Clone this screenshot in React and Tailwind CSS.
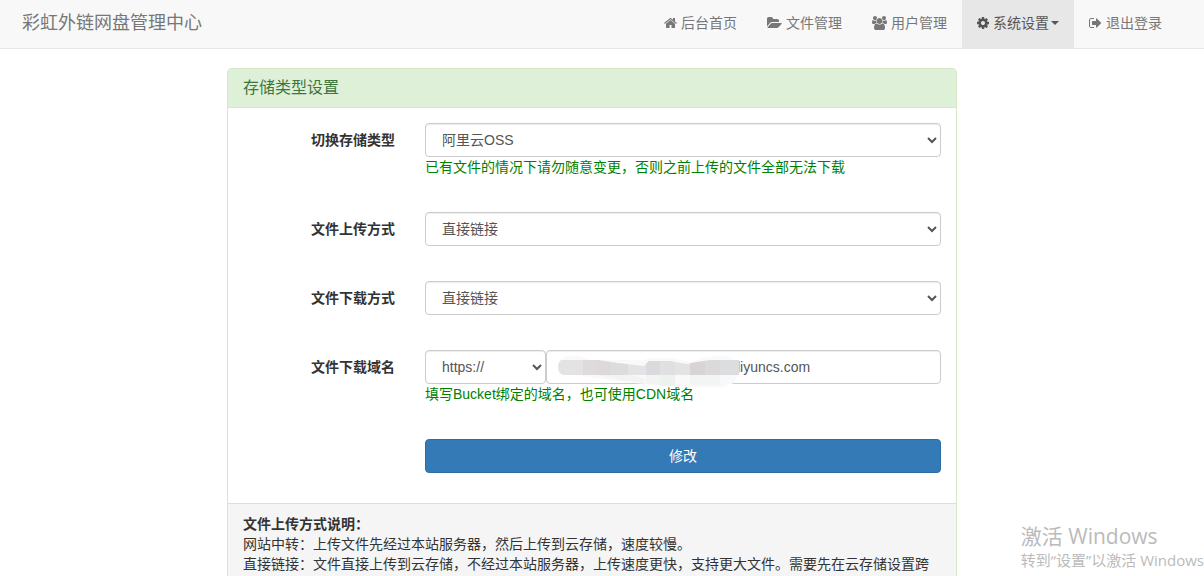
import { useState } from "react";

const HomeIcon = () => (
  <svg viewBox="0 0 1664 1792" className="h-3.5 w-[13px] fill-current" aria-hidden="true">
    <path d="M1408 992v480q0 26-19 45t-45 19h-384v-384h-256v384h-384q-26 0-45-19t-19-45v-480q0-1 .5-3t.5-3l575-474 575 474q1 2 1 6zm223-69l-62 74q-8 9-21 11h-3q-13 0-21-7l-692-577-692 577q-12 8-24 7-13-2-21-11l-62-74q-8-10-7-23.5t11-21.5l719-599q32-26 76-26t76 26l244 204v-195q0-14 9-23t23-9h192q14 0 23 9t9 23v408l219 182q10 8 11 21.5t-7 23.5z" />
  </svg>
);

const FolderIcon = () => (
  <svg viewBox="-64 0 1920 1792" className="h-3.5 w-[15px] fill-current" aria-hidden="true">
    <path d="M1815 952q0 31-31 66l-336 396q-43 51-120.5 86.5t-143.5 35.5h-1088q-34 0-60.5-13t-26.5-43q0-31 31-66l336-396q43-51 120.5-86.5t143.5-35.5h1088q34 0 60.5 13t26.5 43zm-343-344v160h-832q-94 0-197 47.5t-164 119.5l-337 396-5 6q0-4-.5-12.5t-.5-12.5v-960q0-92 66-158t158-66h320q92 0 158 66t66 158v32h544q92 0 158 66t66 158z" />
  </svg>
);

const UsersIcon = () => (
  <svg viewBox="0 0 1920 1792" className="h-3.5 w-[15px] fill-current" aria-hidden="true">
    <path d="M593 896q-162 5-265 128h-134q-82 0-138-40.5t-56-118.5q0-353 124-353 6 0 43.5 21t97.5 42.5 119 21.5q67 0 133-23-5 37-5 66 0 139 81 256zm1071 637q0 120-73 189.5t-194 69.5h-874q-121 0-194-69.5t-73-189.5q0-53 3.5-103.5t14-109 26.5-108.5 43-97.5 62-81 85.5-53.5 111.5-20q10 0 43 21.5t73 48 107 48 135 21.5 135-21.5 107-48 73-48 43-21.5q61 0 111.5 20t85.5 53.5 62 81 43 97.5 26.5 108.5 14 109 3.5 103.5zm-1024-1277q0 106-75 181t-181 75-181-75-75-181 75-181 181-75 181 75 75 181zm704 384q0 159-112.5 271.5t-271.5 112.5-271.5-112.5-112.5-271.5 112.5-271.5 271.5-112.5 271.5 112.5 112.5 271.5zm576 225q0 78-56 118.5t-138 40.5h-134q-103-123-265-128 81-117 81-256 0-29-5-66 66 23 133 23 59 0 119-21.5t97.5-42.5 43.5-21q124 0 124 353zm-128-609q0 106-75 181t-181 75-181-75-75-181 75-181 181-75 181 75 75 181z" />
  </svg>
);

const CogIcon = () => (
  <svg viewBox="0 0 1536 1792" className="h-3.5 w-3 fill-current" aria-hidden="true">
    <path d="M1024 896q0-106-75-181t-181-75-181 75-75 181 75 181 181 75 181-75 75-181zm512-109v222q0 12-8 23t-20 13l-185 28q-19 54-39 91 35 50 107 138 10 12 10 25t-9 23q-27 37-99 108t-94 71q-12 0-26-9l-138-108q-44 23-91 38-16 136-29 186-7 28-36 28h-222q-14 0-24.5-8.5t-11.5-21.5l-28-184q-49-16-90-37l-141 107q-10 9-25 9-14 0-25-11-126-114-165-168-7-10-7-23 0-12 8-23 15-21 51-66.5t54-70.5q-27-50-41-99l-183-27q-13-2-21-12.5t-8-23.5v-222q0-12 8-23t19-13l186-28q14-46 39-92-40-57-107-138-10-12-10-24 0-10 9-23 26-36 98.5-107.5t94.5-71.5q13 0 26 10l138 107q44-23 91-38 16-136 29-186 7-28 36-28h222q14 0 24.5 8.5t11.5 21.5l28 184q49 16 90 37l142-107q9-9 24-9 13 0 25 10 129 119 165 170 7 8 7 22 0 12-8 23-15 21-51 66.5t-54 70.5q26 50 41 98l183 28q13 2 21 12.5t8 23.5z" />
  </svg>
);

const SignOutIcon = () => (
  <svg viewBox="0 0 1664 1792" className="h-3.5 w-[13px] fill-current" aria-hidden="true">
    <path d="M640 1440q0 4 1 20t.5 26.5-3 23.5-10 19.5-20.5 6.5h-320q-119 0-203.5-84.5t-84.5-203.5v-704q0-119 84.5-203.5t203.5-84.5h320q13 0 22.5 9.5t9.5 22.5q0 4 1 20t.5 26.5-3 23.5-10 19.5-20.5 6.5h-320q-66 0-113 47t-47 113v704q0 66 47 113t113 47h312l11.5 1 11.5 3 8 5.5 7 9 2 13.5zm928-544q0 26-19 45l-544 544q-19 19-45 19t-45-19-19-45v-288h-448q-26 0-45-19t-19-45v-384q0-26 19-45t45-19h448v-288q0-26 19-45t45-19 45 19l544 544q19 19 19 45z" />
  </svg>
);

const navItems = [
  { label: "后台首页", icon: HomeIcon },
  { label: "文件管理", icon: FolderIcon },
  { label: "用户管理", icon: UsersIcon },
  { label: "系统设置", icon: CogIcon, active: true, caret: true },
  { label: "退出登录", icon: SignOutIcon },
];

const controlClass =
  "h-[34px] rounded border border-[#ccc] bg-white px-3 py-1.5 text-sm text-[#555] shadow-[inset_0_1px_1px_rgba(0,0,0,0.075)]";

const Navbar = () => (
  <header className="border-b border-[#e7e7e7] bg-[#f8f8f8] pr-5">
    <div className="mx-auto flex h-12 max-w-[1170px] items-stretch justify-between">
      <a href="#home" className="flex items-center px-[15px] pb-0.5 text-lg text-[#777]">
        彩虹外链网盘管理中心
      </a>
      <nav className="flex">
        {navItems.map(({ label, icon: Icon, active, caret }) => (
          <a
            key={label}
            href="#nav"
            className={`flex items-center px-[15px] pb-0.5 ${
              active ? "bg-[#e7e7e7] text-[#555]" : "text-[#777]"
            }`}
          >
            <Icon />
            <span className="ml-1">{label}</span>
            {caret && (
              <span className="ml-0.5 border-x-4 border-t-4 border-x-transparent border-t-current" />
            )}
          </a>
        ))}
      </nav>
    </div>
  </header>
);

const FormRow = ({ id, label, help, children }) => (
  <div className="mb-[35px] flex">
    <label htmlFor={id} className="w-1/4 px-[15px] pt-[7px] text-right font-bold">
      {label}
    </label>
    <div className="w-3/4 px-[15px]">
      {children}
      {help && <p className="text-[green]">{help}</p>}
    </div>
  </div>
);

// Blurred-out part of the domain name
const Mosaic = () => (
  <svg
    viewBox="0 0 184 34"
    className="pointer-events-none absolute top-1 left-2.5 h-[34px] w-[184px]"
    aria-hidden="true"
  >
    <defs>
      <clipPath id="smear">
        <path d="M6 6h35l20 3 27 3 5-5h20l18 3 10-2 14-2h28v15H7Q2 19 2 13T6 6z" />
      </clipPath>
    </defs>
    <path d="M4 6l6-4h12l14 4h52l6-2h22l18 4 14-4 12-2h12l8 6 2 13-4 8-12 4h-44l-32-3-24-2-26-4-20-3H8z" fill="#f9f9f9" />
    <path d="M44 21h30l14 3v5l-24-3z" fill="#f1f4f1" />
    <g clipPath="url(#smear)">
      <path d="M0 0h184v22H0z" fill="#e3e3e3" />
      <path d="M27 0h14v22H27z" fill="#dfdbdb" />
      <path d="M41 0h13v22H41z" fill="#dbd9d9" />
      <path d="M54 0h18v22H54z" fill="#dddcdd" />
      <path d="M90 0h14v22H90z" fill="#d9dadd" />
      <path d="M104 0h15v22h-15z" fill="#e0e0e0" />
      <path d="M134 0h15v22h-15z" fill="#d9d4d4" />
      <path d="M149 0h15v22h-15z" fill="#dadadc" />
      <path d="M164 0h20v22h-20z" fill="#dcdddf" />
    </g>
    <path d="M90 21h14v10l-14-1z" fill="#f3f3f3" />
    <path d="M104 21h15v11h-15z" fill="#edf2ef" />
    <path d="M134 21h30v10h-30z" fill="#f3f4f4" />
  </svg>
);

const App = () => {
  const [storage, setStorage] = useState("阿里云OSS");
  const [upload, setUpload] = useState("直接链接");
  const [download, setDownload] = useState("直接链接");
  const [protocol, setProtocol] = useState("https://");
  const [domain, setDomain] = useState("liyuncs.com");

  return (
    <div className="relative h-screen overflow-hidden bg-white font-['Liberation_Sans','Noto_Sans_CJK_SC',sans-serif] text-sm leading-5 text-[#333]">
      <Navbar />

      <main className="pr-5">
        <section className="mx-auto mt-[19px] max-w-[730px] rounded border border-[#d6e9c6]">
          <h3 className="rounded-t-[3px] border-b border-[#d6e9c6] bg-[#dff0d8] px-[15px] py-[9px] text-base leading-5 text-[#3c763d]">
            存储类型设置
          </h3>

          <form className="py-[15px]" onSubmit={(e) => e.preventDefault()}>
            <FormRow
              id="storage"
              label="切换存储类型"
              help="已有文件的情况下请勿随意变更，否则之前上传的文件全部无法下载"
            >
              <select
                id="storage"
                value={storage}
                onChange={(e) => setStorage(e.target.value)}
                className={`${controlClass} block w-full`}
              >
                <option>阿里云OSS</option>
              </select>
            </FormRow>

            <FormRow id="upload" label="文件上传方式">
              <select
                id="upload"
                value={upload}
                onChange={(e) => setUpload(e.target.value)}
                className={`${controlClass} block w-full`}
              >
                <option>直接链接</option>
              </select>
            </FormRow>

            <FormRow id="download" label="文件下载方式">
              <select
                id="download"
                value={download}
                onChange={(e) => setDownload(e.target.value)}
                className={`${controlClass} block w-full`}
              >
                <option>直接链接</option>
              </select>
            </FormRow>

            <FormRow
              id="domain"
              label="文件下载域名"
              help="填写Bucket绑定的域名，也可使用CDN域名"
            >
              <div className="flex">
                <select
                  aria-label="文件下载域名"
                  value={protocol}
                  onChange={(e) => setProtocol(e.target.value)}
                  className={`${controlClass} w-[121px]`}
                >
                  <option>https://</option>
                </select>
                <div className="relative flex-1">
                  <input
                    id="domain"
                    type="text"
                    value={domain}
                    onChange={(e) => setDomain(e.target.value)}
                    className={`${controlClass} block w-full pl-[190px]`}
                  />
                  <Mosaic />
                </div>
              </div>
            </FormRow>

            <div className="mb-[15px] flex justify-end">
              <div className="w-3/4 px-[15px]">
                <button
                  type="submit"
                  className="block h-[34px] w-full rounded border border-[#2e6da4] bg-[#337ab7] text-white"
                >
                  修改
                </button>
              </div>
            </div>
          </form>

          <footer className="rounded-b-[3px] border-t border-[#ddd] bg-[#f5f5f5] px-[15px] py-2.5">
            <p className="font-bold">文件上传方式说明：</p>
            <p>网站中转：上传文件先经过本站服务器，然后上传到云存储，速度较慢。</p>
            <p>直接链接：文件直接上传到云存储，不经过本站服务器，上传速度更快，支持更大文件。需要先在云存储设置跨</p>
          </footer>
        </section>
      </main>

      {/* System activation notice */}
      <div className="pointer-events-none absolute right-0 bottom-1.5 font-['Open_Sans','Noto_Sans_CJK_SC',sans-serif] whitespace-nowrap text-[#bbb]">
        <p className="text-[21px] leading-7">激活 Windows</p>
        <p className="text-[15px] leading-5">转到“设置”以激活 Windows</p>
      </div>
    </div>
  );
};

export default App;
